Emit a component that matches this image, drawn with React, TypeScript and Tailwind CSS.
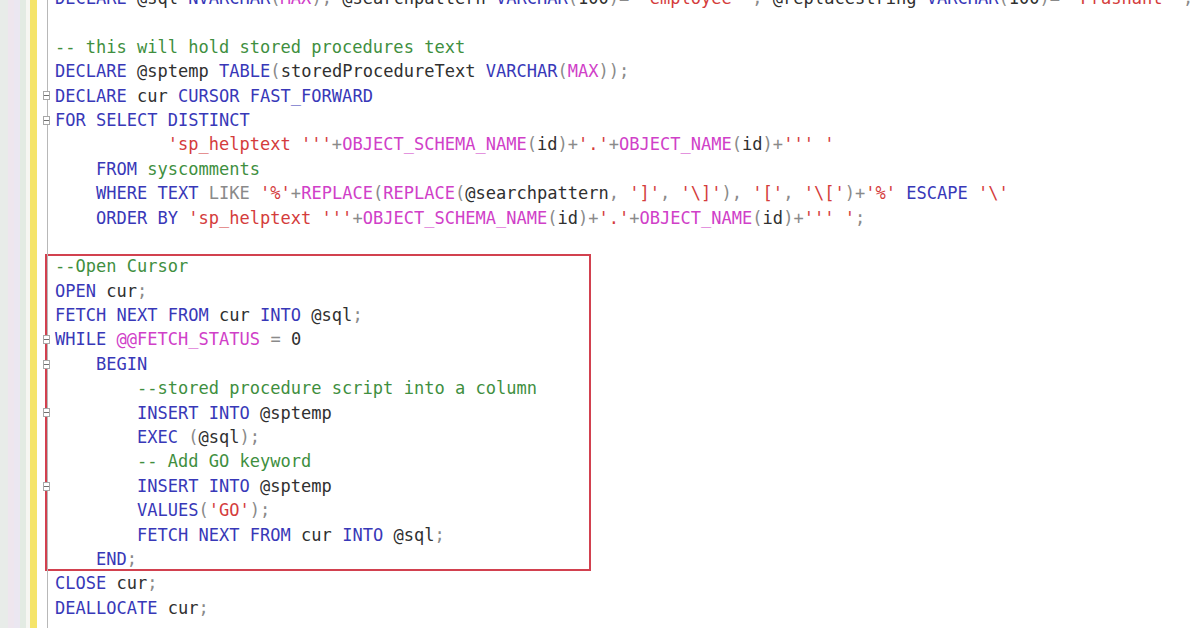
import React from 'react';

type Tok = [string, string];

const K = 'text-[#3838b8]';
const C = 'text-[#3f8f3f]';
const S = 'text-[#d43c3c]';
const F = 'text-[#d040c8]';
const G = 'text-[#8a8a8a]';
const T = 'text-[#303030]';

// each line of the editor as coloured tokens
const lines: Tok[][] = [
  [['DECLARE', K], [' @sql ', T], ['NVARCHAR', K], ['(', G], ['MAX', F], ['),', G], [' @searchpattern ', T], ['VARCHAR', K], ['(', G], ['100', T], [')=', G], [' ', T], ["'employee'", S], [' , ', G], ['@replacestring ', T], ['VARCHAR', K], ['(', G], ['100', T], [')=', G], [' ', T], ["'Prashant'", S], [' ;', G]],
  [],
  [['-- this will hold stored procedures text', C]],
  [['DECLARE', K], [' @sptemp ', T], ['TABLE', K], ['(', G], ['storedProcedureText ', T], ['VARCHAR', K], ['(', G], ['MAX', F], ['));', G]],
  [['DECLARE', K], [' cur ', T], ['CURSOR FAST_FORWARD', K]],
  [['FOR SELECT DISTINCT', K]],
  [['           ', T], ["'sp_helptext '''", S], ['+', G], ['OBJECT_SCHEMA_NAME', F], ['(', G], ['id', T], [')+', G], ["'.'", S], ['+', G], ['OBJECT_NAME', F], ['(', G], ['id', T], [')+', G], ["''' '", S]],
  [['    ', T], ['FROM', K], [' ', T], ['syscomments', C]],
  [['    ', T], ['WHERE TEXT ', K], ['LIKE ', G], ["'%'", S], ['+', G], ['REPLACE', F], ['(', G], ['REPLACE', F], ['(', G], ['@searchpattern', T], [', ', G], ["']'", S], [', ', G], ["'\\]'", S], ['), ', G], ["'['", S], [', ', G], ["'\\['", S], [')+', G], ["'%'", S], [' ', T], ['ESCAPE', K], [' ', T], ["'\\'", S]],
  [['    ', T], ['ORDER BY', K], [' ', T], ["'sp_helptext '''", S], ['+', G], ['OBJECT_SCHEMA_NAME', F], ['(', G], ['id', T], [')+', G], ["'.'", S], ['+', G], ['OBJECT_NAME', F], ['(', G], ['id', T], [')+', G], ["''' '", S], [';', G]],
  [],
  [['--Open Cursor', C]],
  [['OPEN', K], [' cur', T], [';', G]],
  [['FETCH NEXT FROM', K], [' cur ', T], ['INTO', K], [' @sql', T], [';', G]],
  [['WHILE', K], [' ', T], ['@@FETCH_STATUS', F], [' ', T], ['=', G], [' 0', T]],
  [['    ', T], ['BEGIN', K]],
  [['        ', T], ['--stored procedure script into a column', C]],
  [['        ', T], ['INSERT INTO', K], [' @sptemp', T]],
  [['        ', T], ['EXEC', K], [' ', T], ['(', G], ['@sql', T], [');', G]],
  [['        ', T], ['-- Add GO keyword', C]],
  [['        ', T], ['INSERT INTO', K], [' @sptemp', T]],
  [['        ', T], ['VALUES', K], ['(', G], ["'GO'", S], [');', G]],
  [['        ', T], ['FETCH NEXT FROM', K], [' cur ', T], ['INTO', K], [' @sql', T], [';', G]],
  [['    ', T], ['END', K], [';', G]],
  [['CLOSE', K], [' cur', T], [';', G]],
  [['DEALLOCATE', K], [' cur', T], [';', G]],
];

const folds = new Set([4, 5, 14, 15, 17, 20]);

const CodeLine = ({ toks, inBox }: { toks: Tok[]; inBox?: boolean }) => (
  <div className={`h-[24.4px] leading-[24.4px] whitespace-pre ${inBox ? 'pl-[10px]' : 'pl-[5px]'}`}>
    {toks.map(([txt, cls], i) => (
      <span key={i} className={cls}>{txt}</span>
    ))}
  </div>
);

export default function App() {
  const before = lines.slice(0, 11);
  const boxed = lines.slice(11, 24);
  const after = lines.slice(24);

  return (
    <div className="h-[628px] w-[1196px] overflow-hidden bg-white flex">
      {/* margin stripes */}
      <div className="w-[8px] bg-[#e8ece9]" />
      <div className="w-[6px] bg-[#eee6ee]" />
      <div className="w-[6px] bg-[#ebe7f1]" />
      <div className="w-[6px] bg-[#e3ebe3]" />
      <div className="w-[4px] bg-[#f6f6f2]" />
      <div className="w-[7px] bg-[#f5e46a]" />
      <div className="w-[3px] bg-white" />

      {/* outlining column */}
      <div className="relative w-[10px] -mt-[14px] flex flex-col">
        <div className="absolute left-[7px] top-0 bottom-0 w-px bg-[#b8b8b8]" />
        {lines.map((_, i) => (
          <div key={i} className="relative h-[24.4px] shrink-0 flex items-center">
            {folds.has(i) && (
              <div className="ml-[3px] w-[9px] h-[9px] border border-[#a8a8a8] bg-white flex items-center justify-center">
                <div className="w-[5px] h-px bg-[#707070]" />
              </div>
            )}
          </div>
        ))}
      </div>

      {/* code */}
      <div className="flex-1 -mt-[14px] text-[17.05px] font-['DejaVu_Sans_Mono',monospace]">
        {before.map((t, i) => (
          <CodeLine key={i} toks={t} />
        ))}
        <div className="-ml-[5px] w-[546px] ring-2 ring-inset ring-[#d2414f]">
          {boxed.map((t, i) => (
            <CodeLine key={i} toks={t} inBox />
          ))}
        </div>
        {after.map((t, i) => (
          <CodeLine key={i} toks={t} />
        ))}
      </div>
    </div>
  );
}
